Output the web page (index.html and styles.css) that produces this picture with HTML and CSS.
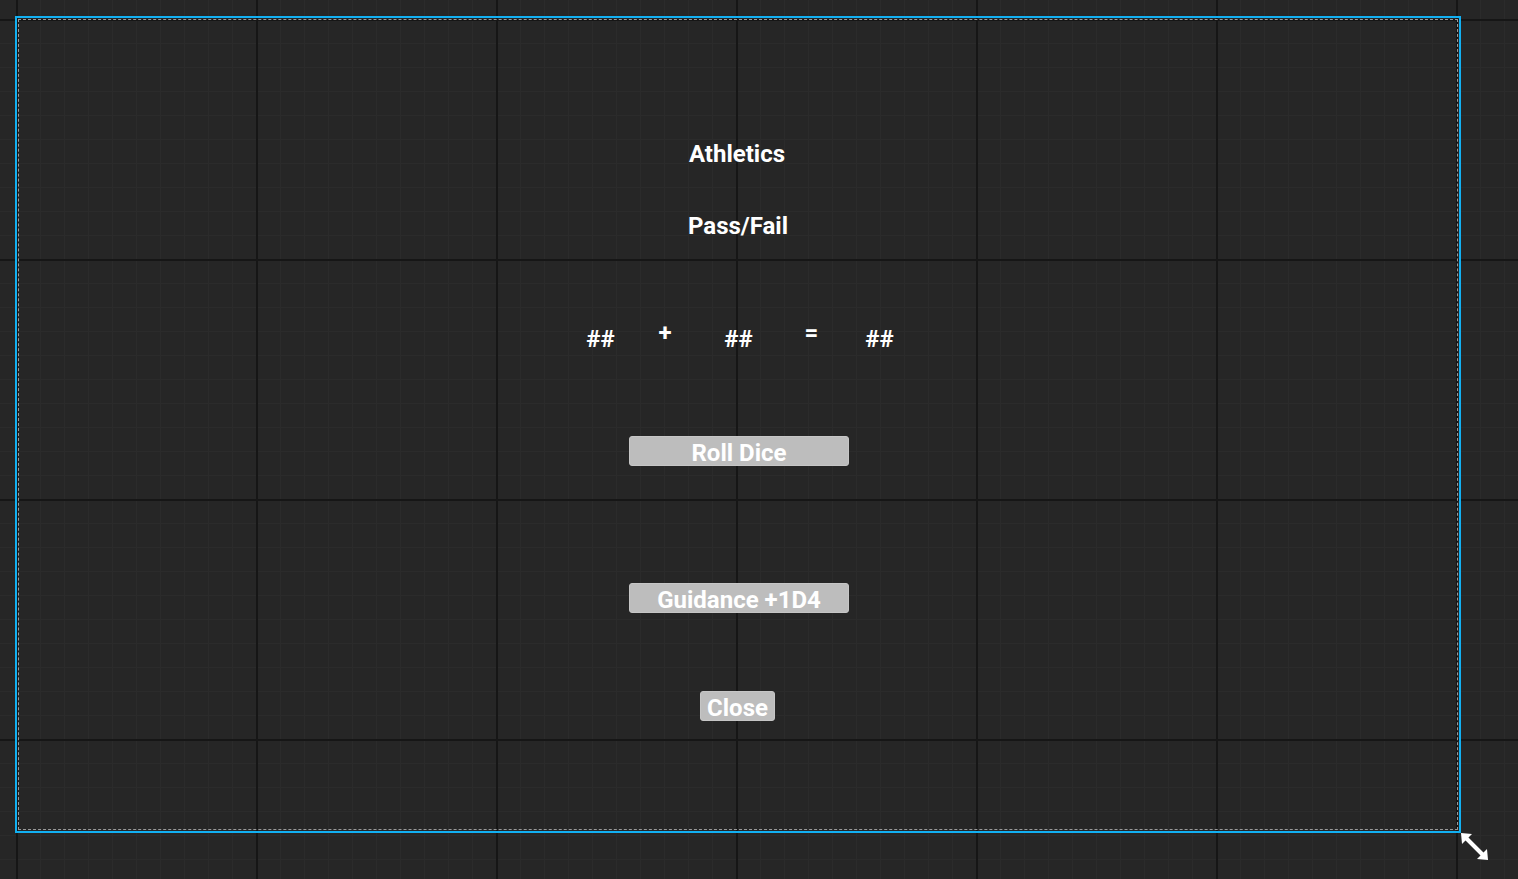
FILE: index.html
```html
<!DOCTYPE html>
<html lang="en">
<head>
  <meta charset="UTF-8" />
  <meta name="viewport" content="width=device-width, initial-scale=1.0" />
  <title>Skill Check - Designer</title>
  <link rel="stylesheet" href="styles.css">
</head>
<body>

  <!-- WIDGET SELECCIONADO EN EL DISEÑADOR -->
  <div class="widget">
    <div class="widget-inner">
      <div class="titulo">Athletics</div>
      <div class="resultado">Pass/Fail</div>

      <div class="ecuacion">
        <span class="valor">##</span>
        <span class="signo">+</span>
        <span class="valor">##</span>
        <span class="signo">=</span>
        <span class="valor">##</span>
      </div>

      <button class="boton boton-roll">Roll Dice</button>
      <button class="boton boton-guidance">Guidance +1D4</button>
      <button class="boton boton-close">Close</button>
    </div>

    <svg class="resize" width="28" height="28" viewBox="0 0 28 28">
      <line x1="5" y1="5" x2="22" y2="22" stroke="#fff" stroke-width="4" />
      <polygon points="0,0 11,1 1,11" fill="#fff" />
      <polygon points="27,27 16,26 26,16" fill="#fff" />
    </svg>
  </div>

</body>
</html>
```

FILE: styles.css
```css
:root {
  --grid-major: #161616;
  --grid-minor: #2b2b2b;
  --selection: #12b0f2;
  --button-bg: #bdbdbd;
}
html, body {
  height: 100%;
}
body {
  margin: 0;
  padding: 16px 0 0 15px;
  box-sizing: border-box;
  overflow: hidden;
  font-family: Roboto, "Liberation Sans", sans-serif;
  font-weight: 700;
  color: #fff;
  background-color: #262626;
  background-image:
    linear-gradient(to right, var(--grid-major) 2px, transparent 2px),
    linear-gradient(to bottom, var(--grid-major) 2px, transparent 2px),
    linear-gradient(to right, var(--grid-minor) 1px, transparent 1px),
    linear-gradient(to bottom, var(--grid-minor) 1px, transparent 1px);
  background-size: 240px 240px, 240px 240px, 24px 24px, 24px 24px;
  background-position: 16px 19px, 16px 19px, 16px 19px, 16px 19px;
}
.widget {
  position: relative;
  width: 1446px;
  height: 817px;
  box-sizing: border-box;
  border: 2px solid var(--selection);
  padding: 1px;
}
.widget-inner {
  height: 100%;
  box-sizing: border-box;
  border: 1px dashed #9a9a9a;
  display: flex;
  flex-direction: column;
  align-items: center;
  padding-top: 120px;
}
.titulo, .resultado, .ecuacion {
  font-size: 24px;
  line-height: 28px;
}
.titulo {
  margin-left: -2px;
}
.resultado {
  margin-top: 44px;
}
.ecuacion {
  margin-top: 85px;
  margin-left: 8px;
  display: grid;
  grid-template-columns: 68px 61px 86px 60px 76px;
  text-align: center;
}
.signo {
  margin-top: -6px;
}
.boton {
  font-family: inherit;
  font-weight: 700;
  font-size: 24px;
  line-height: 28px;
  color: #fff;
  background: var(--button-bg);
  border: 1px solid #c6c6c6;
  border-radius: 3px;
  height: 30px;
  padding: 2px 0 0 0;
  box-sizing: border-box;
  cursor: pointer;
}
.boton-roll {
  width: 220px;
  margin-top: 83px;
  margin-left: 2px;
}
.boton-guidance {
  width: 220px;
  margin-top: 117px;
  margin-left: 2px;
}
.boton-close {
  width: 75px;
  margin-top: 78px;
  margin-left: -1px;
}
.resize {
  position: absolute;
  left: calc(100% + 2px);
  top: calc(100% + 2px);
}
```
